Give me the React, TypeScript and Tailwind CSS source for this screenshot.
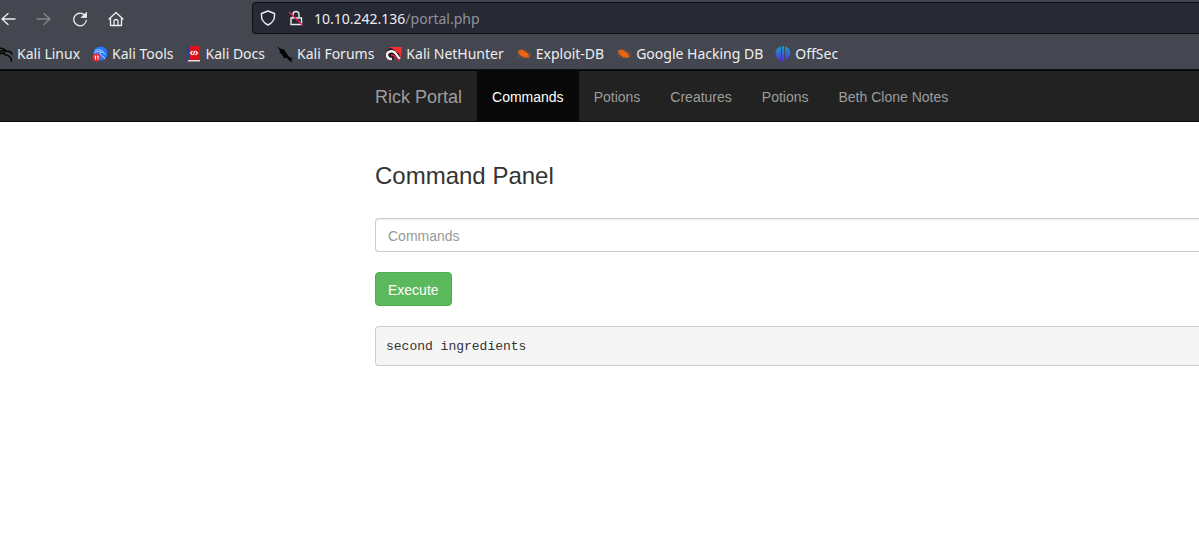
import React from "react";

const KaliDragon = () => (
  <svg viewBox="0 0 16 16" className="size-4 shrink-0" fill="none" stroke="#050505" strokeLinecap="round" aria-hidden="true">
    <path d="M2 2.500C5 1.500 7 3 9 4.500M3 5.500C6 4 8 4.500 10 5C12.500 5 14 6 15 8" strokeWidth="1.500" />
    <path d="M8 5C6.500 8 8 9.500 10.500 9.500C13 10 14 12 14.500 15M3 8C5 6.500 6 7 7 8" strokeWidth="1.500" />
  </svg>
);

const KaliTools = () => (
  <svg viewBox="0 0 16 16" className="size-4 shrink-0" aria-hidden="true">
    <circle cx="8.500" cy="7.500" r="7" fill="#2777ff" />
    <path d="M3 4.500C7 3 9.500 4 11.500 6M2 7C6 4.500 9 6 11 6.500L13.500 8.500M8.500 6C7 9 9 9.500 11 10.500Q12.500 11 12.500 13" fill="none" stroke="#b4d2ff" strokeWidth="1" />
    <circle cx="4.500" cy="11.500" r="4" fill="#ed2935" />
    <path d="M2.500 10h1v3.500M5 10h1v3.500" fill="none" stroke="#fff" strokeWidth="1" />
  </svg>
);

const KaliDocs = () => (
  <svg viewBox="0 0 16 16" className="size-4 shrink-0" aria-hidden="true">
    <path d="M2 0h12v15H2z" fill="#de1018" />
    <path d="M2 0h1v14H2z" fill="#17409a" />
    <path d="M2 14h12v1.500H2z" fill="#e9dede" />
    <path d="M6.500 5L4.500 7l2 2M9.500 5l2 2-2 2M8.500 5l-1 4" fill="none" stroke="#fff" strokeWidth="1.200" />
  </svg>
);

const KaliForums = () => (
  <svg viewBox="0 0 16 16" className="size-4 shrink-0" aria-hidden="true">
    <path d="M0 0l3 2.500 4 1 2 3 2 3 2 2 3 1-2 1 2 3-4-2-2-2.500-3 0-2-3-2.500-3 .5-1z" fill="#050505" />
  </svg>
);

const NetHunter = () => (
  <svg viewBox="0 0 16 16" className="size-4 shrink-0" fill="none" aria-hidden="true">
    <path d="M3 1h13l-1 11z" fill="#f42e36" />
    <path d="M0 5l4-3 3 1 6 5 2 5-3 2-4-4-2 4-5-3z" fill="#25151c" />
    <path d="M6 13C0 13.500-.5 6.500 4 5.500C9 4 10 9 14 13" stroke="#f5f1f3" strokeWidth="2.400" />
    <path d="M5 9.500C7 7.500 9 11 13 15" stroke="#e32443" strokeWidth="1.400" />
  </svg>
);

const ExploitBug = () => (
  <svg viewBox="0 0 16 16" className="size-4 shrink-0" aria-hidden="true">
    <path d="M2 5Q4 3 8 4.500Q12.500 6.500 13.500 11Q9 13 5 10Q2 8 2 5z" fill="#ee6511" />
    <path d="M1 4l4 2M6 3l3 3M10 4v3M12 7l3 0M12 9l3 0M1 8l4 0M2 11l4-2M6 13l3-3M11 11l2 2" stroke="#a45630" strokeWidth=".7" />
  </svg>
);

const OffSec = () => (
  <svg viewBox="0 0 16 16" className="size-4 shrink-0" aria-hidden="true">
    <defs>
      <linearGradient id="offsec" x1="0" y1="0" x2="0" y2="1">
        <stop stopColor="#13a2bd" />
        <stop offset="1" stopColor="#5b25e7" />
      </linearGradient>
    </defs>
    <path d="M6 .5v13.500Q.5 12 .5 7T6 .5zM7 0h2v16H7zM10 .5Q15.500 2 15.500 7T10 14z" fill="url(#offsec)" />
  </svg>
);

const bookmarks = [
  { label: "Kali Linux", Icon: KaliDragon },
  { label: "Kali Tools", Icon: KaliTools },
  { label: "Kali Docs", Icon: KaliDocs },
  { label: "Kali Forums", Icon: KaliForums },
  { label: "Kali NetHunter", Icon: NetHunter },
  { label: "Exploit-DB", Icon: ExploitBug },
  { label: "Google Hacking DB", Icon: ExploitBug },
  { label: "OffSec", Icon: OffSec },
];

const toolbar = [
  { label: "Back", d: "M15 8H2M8 2.500L2 8l6 5.500", tone: "text-[#eeeef0]" },
  { label: "Forward", d: "M1 8h13M8 2.500L14 8l-6 5.500", tone: "text-[#85878c]" },
  { label: "Reload", d: "M12.500 4A6.300 6.300 0 1 0 14.300 9.500", tone: "text-[#eeeef0]" },
  { label: "Home", d: "M1 8l7-6.500L15 8M2.500 7v7.500h11V7M6 14.500V10.500a2 2 0 0 1 4 0v4", tone: "text-[#eeeef0]" },
];

const navItems = ["Commands", "Potions", "Creatures", "Potions", "Beth Clone Notes"];

export default function App() {
  return (
    <div className="min-h-screen overflow-x-hidden bg-white font-['Liberation_Sans',Arial,sans-serif] text-sm text-[#333]">
      <header className="border-b border-[#0e0f14] bg-[#44474f] font-['Noto_Sans',sans-serif] text-[#eeeef0]">
        <div className="flex pt-0.5">
          <div className="flex w-[252px] shrink-0 items-center gap-5 pt-0.5">
            {toolbar.map(({ label, d, tone }) => (
              <button key={label} aria-label={label} className={tone}>
                <svg viewBox="0 0 16 16" className="size-4" fill="none" stroke="currentColor" strokeWidth="1.300" strokeLinecap="round" strokeLinejoin="round">
                  <path d={d} />
                  {label === "Reload" && <path d="M14.500 1.500v5h-5z" fill="currentColor" strokeWidth=".8" />}
                </svg>
              </button>
            ))}
          </div>
          <div className="flex h-8 min-w-0 flex-1 items-center rounded-l border border-r-0 border-[#0e0f14] bg-[#272935] pl-[7px]">
            <svg viewBox="0 0 16 16" className="mr-3 size-4 shrink-0" fill="none" stroke="currentColor" strokeWidth="1.400" strokeLinejoin="round" aria-hidden="true">
              <path d="M8 1l6.500 2.500V6c0 4-2.500 7-6.500 9-4-2-6.500-5-6.500-9V3.500z" />
            </svg>
            <svg viewBox="0 0 16 16" className="mr-2.5 size-4 shrink-0" fill="none" strokeWidth="1.400" aria-hidden="true">
              <path d="M3 8h10.500v6.500H3zM5 8V4.500a3 3 0 0 1 6 0V8" stroke="#e8e8eb" />
              <path d="M1 2l13.500 13" stroke="#e62350" />
            </svg>
            <span className="pt-0.5">10.10.242.136<span className="text-[#929399]">/portal.php</span></span>
          </div>
        </div>
        <nav aria-label="Bookmarks" className="flex h-[35px] items-center gap-3 overflow-hidden pt-1 text-sm">
          {bookmarks.map(({ label, Icon }) => (
            <a key={label} href="#" className="flex shrink-0 items-center gap-1 first:-ml-[3px]">
              <Icon />
              {label}
            </a>
          ))}
        </nav>
      </header>

      <nav aria-label="Portal" className="flex border-y border-[#080808] bg-[#222] pl-[375px] leading-5 text-[#9d9d9d]">
        <a href="#" className="pt-4 pr-[15px] pb-3.5 text-lg leading-5">Rick Portal</a>
        <ul className="flex">
          {navItems.map((item, i) => (
            <li key={i}>
              <a href="#" className={i === 0 ? "block bg-[#080808] px-[15px] pt-4 pb-3.5 text-white" : "block px-[15px] pt-4 pb-3.5"}>{item}</a>
            </li>
          ))}
        </ul>
      </nav>

      <main className="pt-10 pl-[375px]">
        <form onSubmit={(e) => e.preventDefault()}>
          <h3 className="mb-7 text-2xl leading-7">
            <label htmlFor="command">Command Panel</label>
          </h3>
          <input
            id="command"
            type="text"
            placeholder="Commands"
            className="block h-[34px] w-full rounded-l border border-r-0 border-[#ccc] px-3 pt-2 pb-1.5 shadow-[inset_0_1px_1px_rgba(0,0,0,0.075)] placeholder:text-[#999]"
          />
          <button type="submit" className="mt-5 block rounded border border-[#4cae4c] bg-[#5cb85c] px-3 pt-[7px] pb-[5px] leading-5 text-white">
            Execute
          </button>
        </form>
        <pre className="mt-5 rounded-l border border-r-0 border-[#ccc] bg-[#f5f5f5] px-2.5 pt-2.5 pb-2 font-['Liberation_Mono',monospace] text-[13px] leading-5">second ingredients</pre>
      </main>
    </div>
  );
}
